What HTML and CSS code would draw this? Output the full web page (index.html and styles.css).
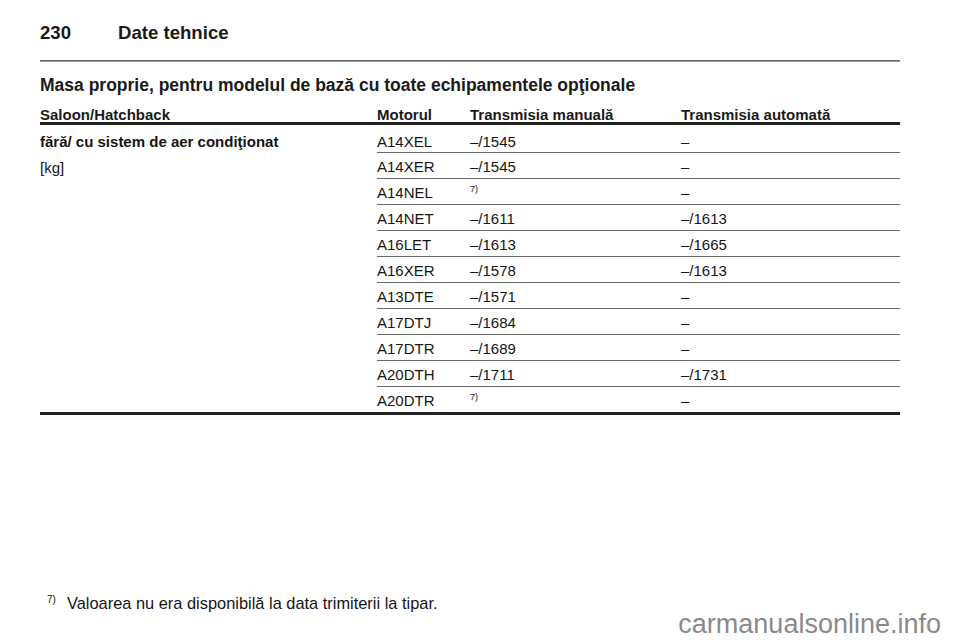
FILE: index.html
```html
<!DOCTYPE html>
<html lang="ro">
<head>
<meta charset="utf-8">
<title>Date tehnice</title>
<link rel="stylesheet" href="styles.css">
</head>
<body>
<div class="page">
  <header class="page-head">
    <span class="page-num">230</span><span class="page-title">Date tehnice</span>
  </header>
  <div class="rule"></div>
  <h2 class="section">Masa proprie, pentru modelul de bază cu toate echipamentele opţionale</h2>
  <table class="spec">
    <colgroup>
      <col class="c1"><col class="c2"><col class="c3"><col class="c4">
    </colgroup>
    <thead>
      <tr><th>Saloon/Hatchback</th><th>Motorul</th><th>Transmisia manuală</th><th>Transmisia automată</th></tr>
    </thead>
    <tbody>
      <tr class="first">
        <td class="label" rowspan="11"><div class="lbl-b">fără/ cu sistem de aer condiţionat</div><div class="lbl-u">[kg]</div></td>
        <td>A14XEL</td><td>–/1545</td><td>–</td></tr>
      <tr><td>A14XER</td><td>–/1545</td><td>–</td></tr>
      <tr><td>A14NEL</td><td><sup class="fn">7)</sup></td><td>–</td></tr>
      <tr><td>A14NET</td><td>–/1611</td><td>–/1613</td></tr>
      <tr><td>A16LET</td><td>–/1613</td><td>–/1665</td></tr>
      <tr><td>A16XER</td><td>–/1578</td><td>–/1613</td></tr>
      <tr><td>A13DTE</td><td>–/1571</td><td>–</td></tr>
      <tr><td>A17DTJ</td><td>–/1684</td><td>–</td></tr>
      <tr><td>A17DTR</td><td>–/1689</td><td>–</td></tr>
      <tr><td>A20DTH</td><td>–/1711</td><td>–/1731</td></tr>
      <tr class="last"><td>A20DTR</td><td><sup class="fn">7)</sup></td><td>–</td></tr>
    </tbody>
  </table>
  <p class="footnote"><sup class="fn-mark">7)</sup><span>Valoarea nu era disponibilă la data trimiterii la tipar.</span></p>
</div>
<div class="watermark">carmanualsonline.info</div>
</body>
</html>
```
FILE: styles.css
```css
html, body {
  margin: 0;
  padding: 0;
  background: #ffffff;
}
body {
  font-family: "Liberation Sans", Arial, sans-serif;
  color: #151515;
  width: 960px;
  height: 642px;
  overflow: hidden;
}
.page {
  padding: 21px 60px 0 40px;
}
.page-head {
  font-size: 18.6px;
  font-weight: bold;
  line-height: 24px;
  color: #1a1a1a;
}
.page-num {
  display: inline-block;
  width: 78px;
}
.rule {
  margin-top: 15px;
  border-top: 1px solid #6a6a6a;
  height: 1px;
  background: #9a9a9a;
}
.section {
  margin: 13px 0 0 0;
  font-size: 17.5px;
  line-height: 20px;
  font-weight: bold;
  color: #1a1a1a;
}
.spec {
  margin-top: 12px;
  width: 860px;
  border-collapse: collapse;
  table-layout: fixed;
  font-size: 15px;
}
.c1 { width: 337px; }
.c2 { width: 93px; }
.c3 { width: 211px; }
.c4 { width: 219px; }
.spec th {
  text-align: left;
  font-weight: bold;
  line-height: 15px;
  padding: 0;
  border-bottom: 3px solid #222;
  color: #1a1a1a;
}
.spec td {
  padding: 5px 0 3px 0;
  line-height: 17px;
  border-bottom: 1px solid #6a6a6a;
  vertical-align: top;
  white-space: nowrap;
}
.spec tr.first td {
  padding-top: 8px;
  padding-bottom: 2px;
}
.spec tr.last td {
  border-bottom: 3px solid #222;
}
.spec td.label {
  border-bottom: 3px solid #222;
  padding: 8px 0 0 0;
}
.lbl-b {
  font-weight: bold;
  line-height: 17px;
}
.lbl-u {
  margin-top: 9px;
  line-height: 17px;
}
.fn {
  font-size: 9px;
  vertical-align: 6px;
  line-height: 0;
}
.footnote {
  margin: 178px 0 0 0;
  font-size: 16.4px;
  line-height: 20px;
  display: flex;
  align-items: baseline;
}
.fn-mark {
  font-size: 10px;
  line-height: 0;
  width: 27px;
  padding-left: 7px;
  box-sizing: border-box;
  display: inline-block;
  position: relative;
  top: -6px;
}
.watermark {
  text-align: right;
  padding-right: 19px;
  font-size: 27px;
  line-height: 30px;
  color: #8a8a8a;
  margin-top: -4px;
}
```
